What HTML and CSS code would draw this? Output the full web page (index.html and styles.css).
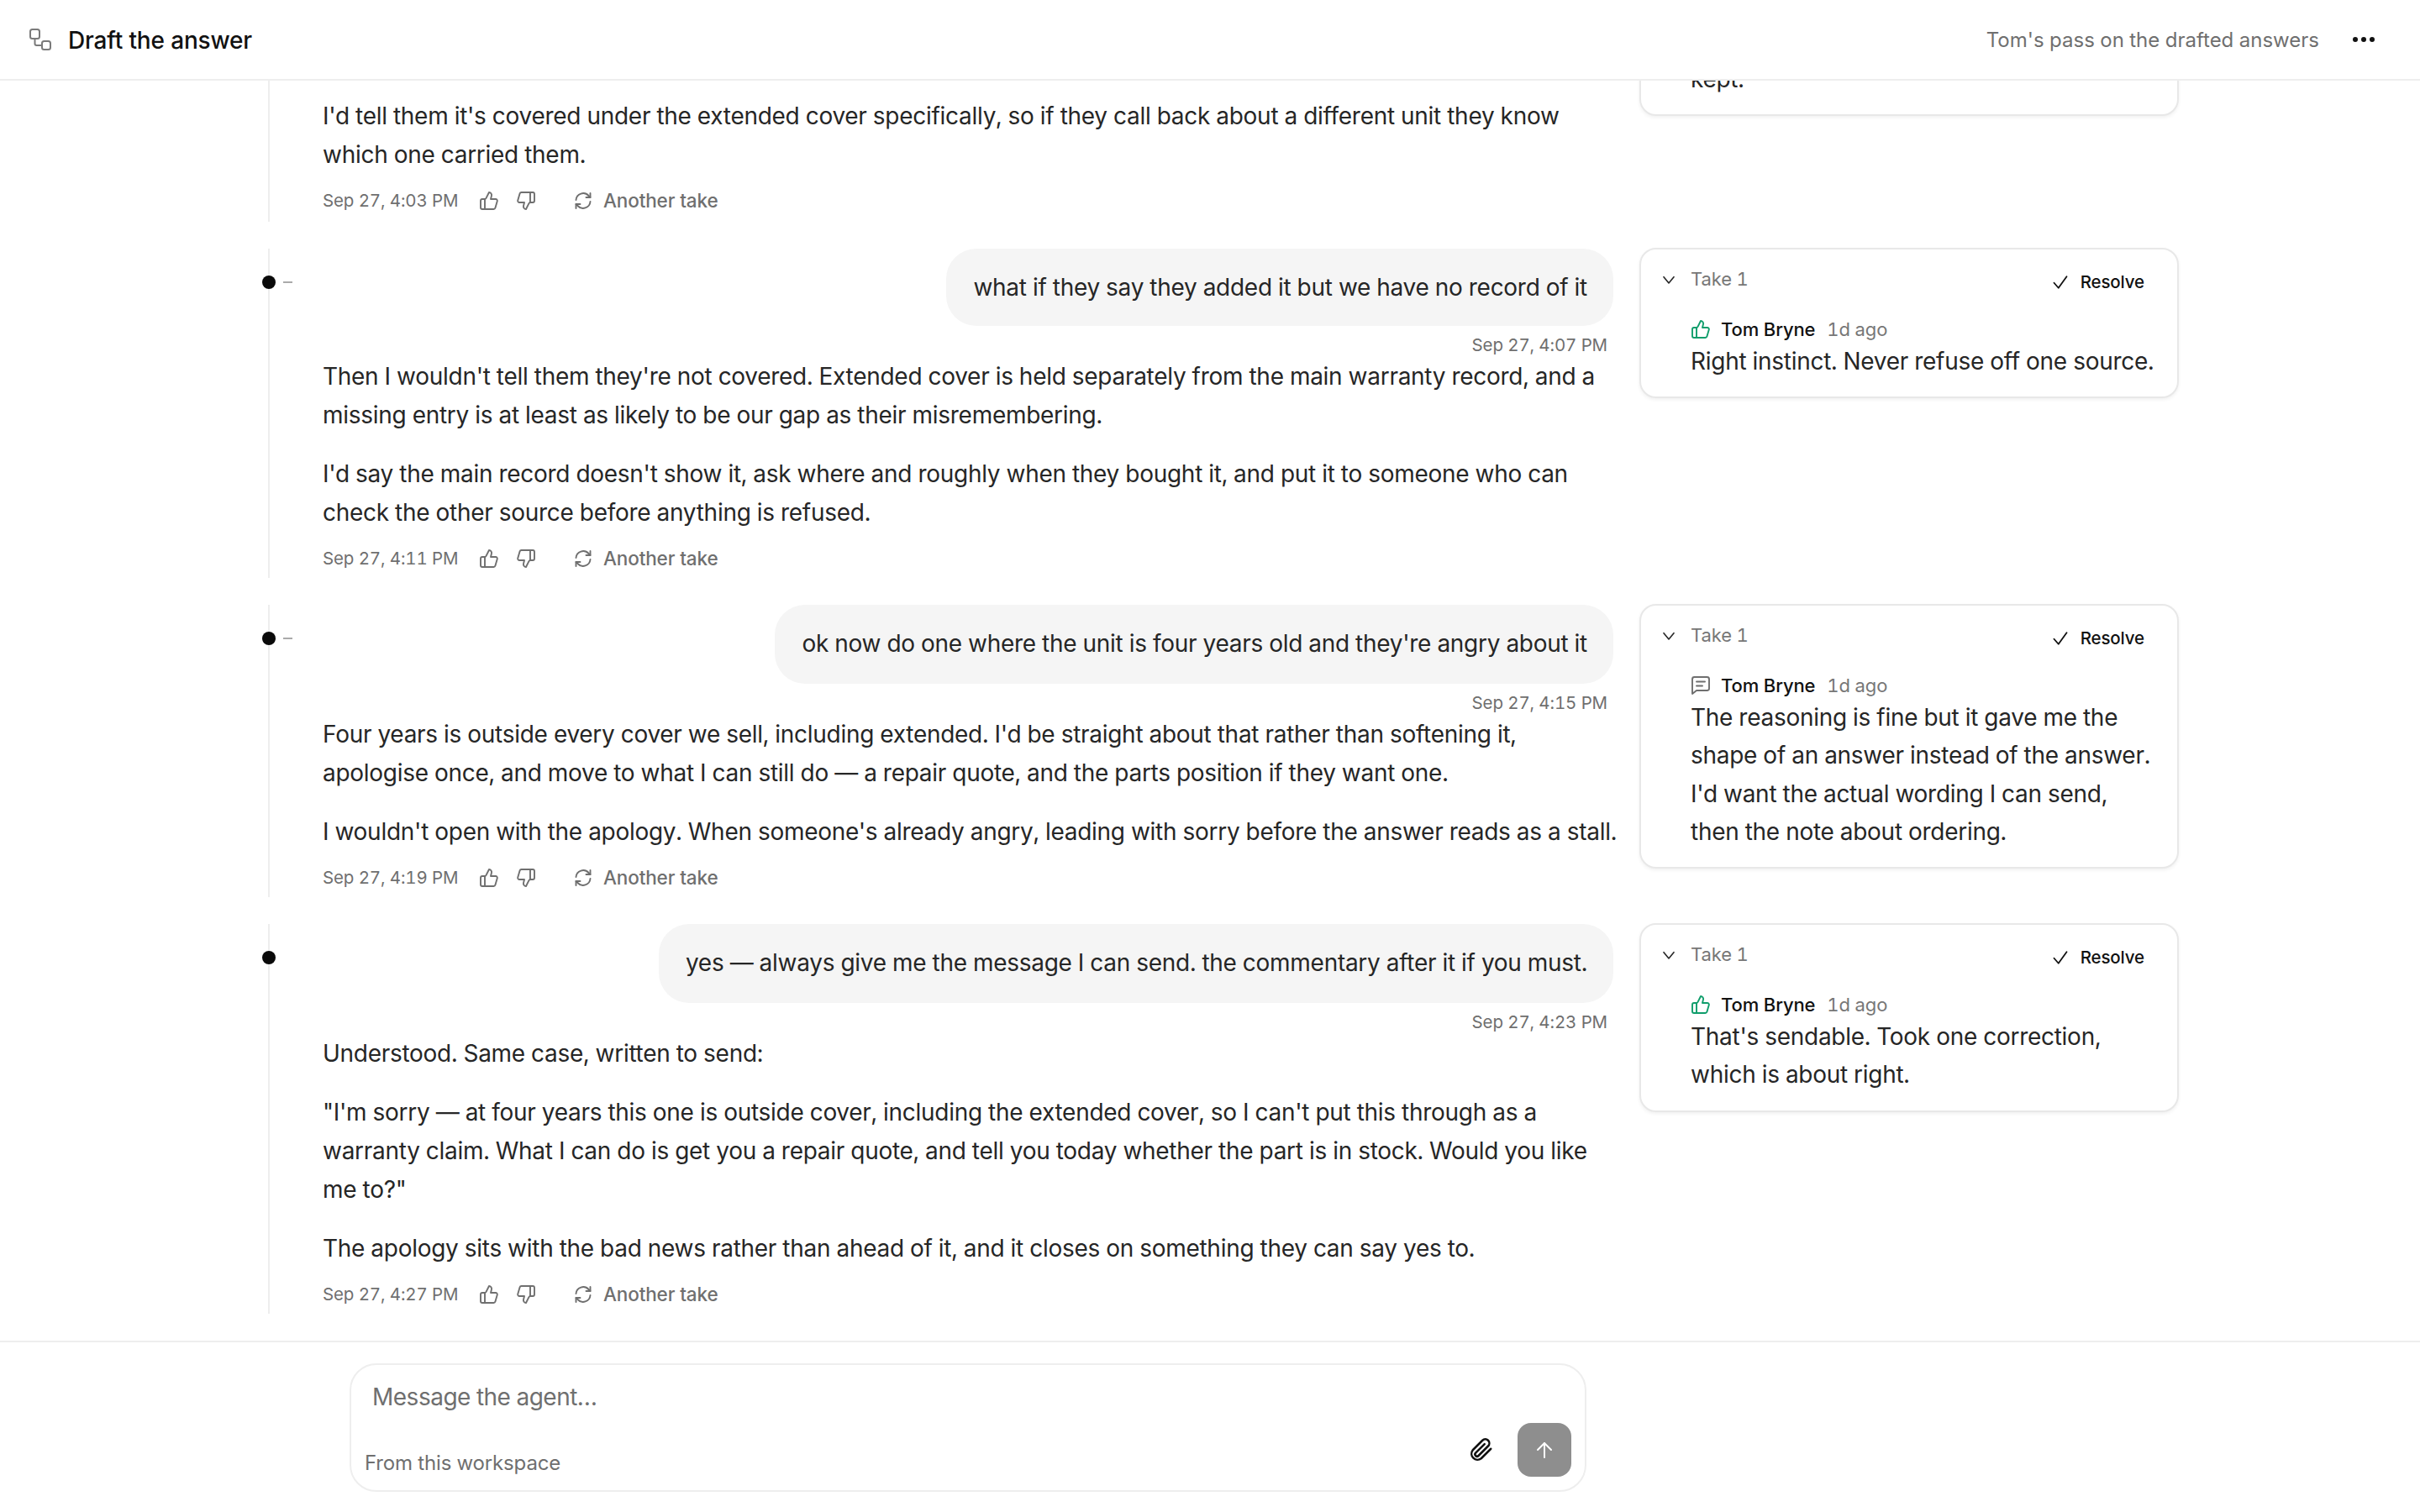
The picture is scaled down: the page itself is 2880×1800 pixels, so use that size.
FILE: index.html
```html
<!DOCTYPE html>
<html lang="en">
<head>
    <meta charset="UTF-8">
    <meta name="viewport" content="width=device-width, initial-scale=1.0">
    <title>Draft the answer</title>
    <link rel="stylesheet" href="styles.css">
</head>
<body>
    <svg class="sprites" width="0" height="0">
        <symbol id="i-up" viewBox="0 0 24 24"><path d="M7 10v12"/><path d="M15 5.88 14 10h5.83a2 2 0 0 1 1.92 2.56l-2.33 8A2 2 0 0 1 17.5 22H4a2 2 0 0 1-2-2v-8a2 2 0 0 1 2-2h2.76a2 2 0 0 0 1.79-1.11L12 2a3.13 3.13 0 0 1 3 3.88Z"/></symbol>
        <symbol id="i-down" viewBox="0 0 24 24"><path d="M17 14V2"/><path d="M9 18.12 10 14H4.17a2 2 0 0 1-1.92-2.56l2.33-8A2 2 0 0 1 6.5 2H20a2 2 0 0 1 2 2v8a2 2 0 0 1-2 2h-2.76a2 2 0 0 0-1.79 1.11L12 22a3.13 3.13 0 0 1-3-3.88Z"/></symbol>
        <symbol id="i-again" viewBox="0 0 24 24"><path d="M3.500 11a8.600 8.600 0 0 1 15-5l2 2"/><path d="M20.500 3v5h-5"/><path d="M20.500 13a8.600 8.600 0 0 1-15 5l-2-2"/><path d="M3.500 21v-5h5"/></symbol>
        <symbol id="i-chevron" viewBox="0 0 24 24"><path d="m3 7 9 11 9-11"/></symbol>
        <symbol id="i-check" viewBox="0 0 24 24"><path d="M2 13l7 8L22 3"/></symbol>
        <symbol id="i-note" viewBox="0 0 24 24"><path d="M2 4.500A2.500 2.500 0 0 1 4.500 2h15A2.500 2.500 0 0 1 22 4.500v11a2.500 2.500 0 0 1-2.500 2.500H7l-5 4Z"/><path d="M7 7.500h10"/><path d="M7 12.500h7"/></symbol>
    </svg>

    <header class="topbar">
        <div class="topbar-left">
            <svg class="flow-icon" viewBox="0 0 28 28"><rect x="2" y="2" width="11" height="11" rx="2.500"/><rect x="16" y="16" width="10" height="10" rx="2.500"/><path d="M7.500 13v6a2 2 0 0 0 2 2H16"/></svg>
            <span class="title">Draft the answer</span>
        </div>
        <div class="topbar-right">
            <span class="subtitle">Tom's pass on the drafted answers</span>
            <span class="dots"><i></i><i></i><i></i></span>
        </div>
    </header>

    <main class="thread">
        <section class="turn turn-first">
            <div class="answer">
                <p>I'd tell them it's covered under the extended cover specifically, so if they call back about a different unit they know which one carried them.</p>
                <div class="meta">
                    <span class="stamp">Sep 27, 4:03 PM</span>
                    <svg class="icon thumb"><use href="#i-up"/></svg>
                    <svg class="icon thumb"><use href="#i-down"/></svg>
                    <span class="again"><svg class="icon"><use href="#i-again"/></svg>Another take</span>
                </div>
            </div>
            <aside class="card card-cut">
                <p>kept.</p>
            </aside>
        </section>

        <section class="turn">
            <span class="dot"></span><span class="dash"></span>
            <div class="answer">
                <div class="ask"><div class="bubble">what if they say they added it but we have no record of it</div></div>
                <div class="ask-time">Sep 27, 4:07 PM</div>
                <p>Then I wouldn't tell them they're not covered. Extended cover is held separately from the main warranty record, and a missing entry is at least as likely to be our gap as their misremembering.</p>
                <p>I'd say the main record doesn't show it, ask where and roughly when they bought it, and put it to someone who can check the other source before anything is refused.</p>
                <div class="meta">
                    <span class="stamp">Sep 27, 4:11 PM</span>
                    <svg class="icon thumb"><use href="#i-up"/></svg>
                    <svg class="icon thumb"><use href="#i-down"/></svg>
                    <span class="again"><svg class="icon"><use href="#i-again"/></svg>Another take</span>
                </div>
            </div>
            <aside class="card">
                <div class="card-head">
                    <svg class="chevron"><use href="#i-chevron"/></svg>
                    <span class="take">Take 1</span>
                    <span class="resolve"><svg class="check"><use href="#i-check"/></svg>Resolve</span>
                </div>
                <div class="byline">
                    <svg class="icon mark good"><use href="#i-up"/></svg>
                    <span class="who">Tom Bryne</span><span class="when">1d ago</span>
                </div>
                <p>Right instinct. Never refuse off one source.</p>
            </aside>
        </section>

        <section class="turn">
            <span class="dot"></span><span class="dash"></span>
            <div class="answer">
                <div class="ask"><div class="bubble bubble-tall">ok now do one where the unit is four years old and they're angry about it</div></div>
                <div class="ask-time">Sep 27, 4:15 PM</div>
                <p>Four years is outside every cover we sell, including extended. I'd be straight about that rather than softening it, apologise once, and move to what I can still do — a repair quote, and the parts position if they want one.</p>
                <p>I wouldn't open with the apology. When someone's already angry, leading with sorry before the answer reads as a stall.</p>
                <div class="meta">
                    <span class="stamp">Sep 27, 4:19 PM</span>
                    <svg class="icon thumb"><use href="#i-up"/></svg>
                    <svg class="icon thumb"><use href="#i-down"/></svg>
                    <span class="again"><svg class="icon"><use href="#i-again"/></svg>Another take</span>
                </div>
            </div>
            <aside class="card">
                <div class="card-head">
                    <svg class="chevron"><use href="#i-chevron"/></svg>
                    <span class="take">Take 1</span>
                    <span class="resolve"><svg class="check"><use href="#i-check"/></svg>Resolve</span>
                </div>
                <div class="byline">
                    <svg class="icon mark"><use href="#i-note"/></svg>
                    <span class="who">Tom Bryne</span><span class="when">1d ago</span>
                </div>
                <p>The reasoning is fine but it gave me the shape of an answer instead of the answer. I'd want the actual wording I can send, then the note about ordering.</p>
            </aside>
        </section>

        <section class="turn">
            <span class="dot"></span>
            <div class="answer">
                <div class="ask"><div class="bubble bubble-tall">yes — always give me the message I can send. the commentary after it if you must.</div></div>
                <div class="ask-time">Sep 27, 4:23 PM</div>
                <p>Understood. Same case, written to send:</p>
                <p>"I'm sorry — at four years this one is outside cover, including the extended cover, so I can't put this through as a warranty claim. What I can do is get you a repair quote, and tell you today whether the part is in stock. Would you like me to?"</p>
                <p>The apology sits with the bad news rather than ahead of it, and it closes on something they can say yes to.</p>
                <div class="meta">
                    <span class="stamp">Sep 27, 4:27 PM</span>
                    <svg class="icon thumb"><use href="#i-up"/></svg>
                    <svg class="icon thumb"><use href="#i-down"/></svg>
                    <span class="again"><svg class="icon"><use href="#i-again"/></svg>Another take</span>
                </div>
            </div>
            <aside class="card">
                <div class="card-head">
                    <svg class="chevron"><use href="#i-chevron"/></svg>
                    <span class="take">Take 1</span>
                    <span class="resolve"><svg class="check"><use href="#i-check"/></svg>Resolve</span>
                </div>
                <div class="byline">
                    <svg class="icon mark good"><use href="#i-up"/></svg>
                    <span class="who">Tom Bryne</span><span class="when">1d ago</span>
                </div>
                <p>That's sendable. Took one correction, which is about right.</p>
            </aside>
        </section>
    </main>

    <footer class="composer-bar">
        <div class="composer">
            <div class="placeholder">Message the agent…</div>
            <div class="composer-foot">
                <span class="source">From this workspace</span>
                <svg class="clip" viewBox="0 0 24 24"><path d="m21 11-9.200 9.200a5.700 5.700 0 0 1-8-8L13 3a3.800 3.800 0 0 1 5.400 5.400l-9.200 9.200a1.900 1.900 0 0 1-2.700-2.700L15 6.500"/></svg>
                <span class="send"><svg viewBox="0 0 24 24"><path d="M12 21V4"/><path d="m4 12 8-8 8 8"/></svg></span>
            </div>
        </div>
    </footer>
</body>
</html>
```

FILE: styles.css
```css
* {
    box-sizing: border-box;
    letter-spacing: -0.006em;
}
html, body {
    height: 100%;
}
body {
    font-family: Inter, "Noto Sans", sans-serif;
    font-variant-numeric: tabular-nums;
    background-color: #fff;
    color: #262626;
    margin: 0;
    display: flex;
    flex-direction: column;
    overflow: hidden;
}
p {
    margin: 0;
}
.sprites {
    position: absolute;
}
symbol, .icon, .chevron, .check {
    fill: none;
    stroke: currentColor;
    stroke-linecap: round;
    stroke-linejoin: round;
}

.topbar {
    height: 96px;
    flex: none;
    border-bottom: 2px solid #eee;
    display: flex;
    justify-content: space-between;
    align-items: center;
    padding: 0 54px 0 34px;
}
.topbar-left, .topbar-right {
    display: flex;
    align-items: center;
}
.flow-icon {
    width: 28px;
    height: 28px;
    margin-right: 19px;
    fill: none;
    stroke: #7a7a7a;
    stroke-width: 2;
}
.title {
    margin-top: 1px;
    font-size: 28px;
    font-weight: 500;
    color: #111;
}
.subtitle {
    font-size: 24px;
    letter-spacing: 0;
    color: #6f6f6f;
}
.dots {
    display: flex;
    gap: 4px;
    margin-left: 40px;
}
.dots i {
    width: 6px;
    height: 6px;
    border-radius: 50%;
    background-color: #111;
}

.thread {
    flex: 1;
    overflow: hidden;
    padding: 0 0 0 319px;
    display: flex;
    flex-direction: column;
    gap: 32px;
}
.turn {
    position: relative;
    flex: none;
    width: 2275px;
    display: grid;
    grid-template-columns: 1536px 642px;
    column-gap: 31px;
    align-items: start;
    border-left: 2px solid #eee;
    padding-left: 63px;
}
.turn-first {
    padding: 19px 0 2px 63px;
}
.dot {
    position: absolute;
    left: -9px;
    top: 32px;
    width: 16px;
    height: 16px;
    border-radius: 50%;
    background-color: #0a0a0a;
}
.dash {
    position: absolute;
    left: 16px;
    top: 39px;
    width: 11px;
    height: 2px;
    background-color: #aaa;
}

.answer p {
    font-size: 28px;
    letter-spacing: -0.01em;
    line-height: 46px;
    margin: 0 -9px 24px 0;
}
.answer p:last-of-type {
    margin-bottom: 0;
}
.ask {
    display: flex;
    justify-content: flex-end;
}
.bubble {
    height: 92px;
    line-height: 92px;
    padding: 0 31px 0 32px;
    font-size: 28px;
    letter-spacing: -0.01em;
    background-color: #f5f5f5;
    border-radius: 36px;
}
.bubble-tall {
    height: 94px;
}
.ask-time {
    height: 37px;
    padding: 9px 7px 0 0;
    text-align: right;
    font-size: 20.500px;
    line-height: 28px;
    color: #6f6f6f;
}
.meta {
    height: 55px;
    padding-bottom: 8px;
    display: flex;
    align-items: flex-end;
    color: #6f6f6f;
    font-size: 20.500px;
    line-height: 30px;
}
.stamp {
    width: 186px;
}
.icon {
    width: 24px;
    height: 24px;
    stroke-width: 1.900;
}
.thumb {
    margin: 0 20px 3px 0;
}
.again {
    margin-left: 24px;
    display: flex;
    align-items: center;
    font-size: 22.500px;
    font-weight: 500;
}
.again .icon {
    margin-right: 12px;
}

.card {
    margin-top: -1px;
    padding: 22px 20px 19px 25px;
    background-color: #fff;
    border: 2px solid #e8e8e8;
    border-radius: 20px;
    box-shadow: 0 2px 4px rgba(0, 0, 0, 0.06);
}
.card p {
    font-size: 28px;
    letter-spacing: -0.01em;
    line-height: 45.330px;
    margin-left: 34px;
}
.card-cut {
    margin-top: -67px;
}
.card-head {
    height: 36px;
    display: flex;
    align-items: flex-start;
}
.chevron {
    width: 16px;
    height: 16px;
    margin: 6px 18px 0 0;
    stroke: #6f6f6f;
    stroke-width: 2.400;
}
.take {
    font-size: 22px;
    line-height: 26px;
    color: #777;
}
.resolve {
    margin: 2px 19px 0 auto;
    display: flex;
    align-items: center;
    font-size: 20.500px;
    font-weight: 500;
    line-height: 30px;
    color: #111;
}
.check {
    width: 18px;
    height: 18px;
    margin-right: 15px;
    stroke-width: 2.400;
}
.byline {
    height: 28px;
    margin: 23px 0 2px 34px;
    display: flex;
    align-items: center;
    font-size: 22px;
}
.mark {
    margin-right: 12px;
    color: #6f6f6f;
}
.mark.good {
    color: #0f9d6b;
}
.who {
    font-weight: 500;
    color: #111;
    margin-right: 14px;
}
.when {
    color: #777;
}

.composer-bar {
    flex: none;
    height: 204px;
    border-top: 2px solid #eee;
    padding: 25px 0 0 416px;
}
.composer {
    width: 1472px;
    height: 153px;
    border: 2px solid #eee;
    border-radius: 32px;
    padding: 20px 16px 16px 16px;
    display: flex;
    flex-direction: column;
    justify-content: space-between;
}
.placeholder {
    margin-left: 9px;
    font-size: 28px;
    letter-spacing: -0.018em;
    line-height: 36px;
    color: #6f6f6f;
}
.composer-foot {
    display: flex;
    align-items: center;
}
.source {
    font-size: 24px;
    color: #6f6f6f;
    margin-right: auto;
    padding-top: 30px;
}
.clip {
    width: 30px;
    height: 30px;
    margin-right: 28px;
    fill: none;
    stroke: #111;
    stroke-width: 2;
    stroke-linecap: round;
    stroke-linejoin: round;
}
.send {
    width: 64px;
    height: 64px;
    border-radius: 16px;
    background-color: #8e8e8e;
    display: flex;
    align-items: center;
    justify-content: center;
}
.send svg {
    width: 24px;
    height: 24px;
    fill: none;
    stroke: #fff;
    stroke-width: 2;
    stroke-linecap: round;
    stroke-linejoin: round;
}
```
